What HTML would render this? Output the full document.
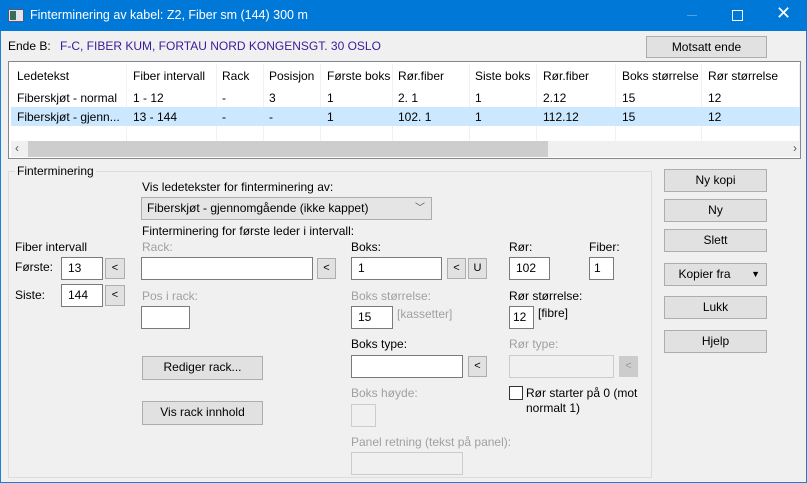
<!DOCTYPE html>
<html><head><meta charset="utf-8"><style>
*{box-sizing:border-box;margin:0;padding:0}
body{width:807px;height:483px;overflow:hidden;background:#f0f0f0;font-family:"Liberation Sans",sans-serif;font-size:12px;color:#000;position:relative}
.a{position:absolute;white-space:nowrap}
.win{position:absolute;left:0;top:0;width:807px;height:483px;border:1px solid #1a7fd6}
.title{position:absolute;left:0;top:0;width:807px;height:31px;background:#0078d7;color:#fff}
.btn{position:absolute;background:#e1e1e1;border:1px solid #adadad;text-align:center;line-height:20px}
.inp{position:absolute;background:#fff;border:1px solid #7a7a7a;padding-left:6px;line-height:20px}
.dis{background:#f0f0f0;border-color:#ccc}
.g{color:#a0a0a0}
.sb{position:absolute;background:#e1e1e1;border:1px solid #adadad;text-align:center;line-height:18px;font-size:11px}
.lv{position:absolute;left:8px;top:61px;width:793px;height:98px;border:1px solid #828790;background:#fff}
.cell{position:absolute;white-space:nowrap}
.sep{position:absolute;top:2px;width:1px;height:77px;background:#eef2f7}
</style></head><body>
<div class="win"></div>
<div class="title">
 <div class="a" style="left:8px;top:9px;width:16px;height:13px;background:#dfe6e9;border:1px solid #557"></div>
 <div class="a" style="left:10px;top:11px;width:6px;height:9px;background:#3a6b5a"></div>
 <div class="a" style="left:30px;top:8px;font-size:12.5px">Finterminering av kabel: Z2, Fiber sm (144) 300 m</div>
 <div class="a" style="left:687px;top:15px;width:10px;height:1px;background:#5a9de0"></div>
 <div class="a" style="left:732px;top:10px;width:11px;height:11px;border:1px solid #fff"></div>
 <div class="a" style="left:776px;top:3px;font-size:18px">✕</div>
</div>
<div class="a" style="left:8px;top:39px">Ende B:</div>
<div class="a" style="left:60px;top:39px;color:#3a1a9a">F-C, FIBER KUM, FORTAU NORD KONGENSGT. 30 OSLO</div>
<div class="btn" style="left:646px;top:36px;width:121px;height:22px">Motsatt ende</div>
<div class="lv">
 <div class="sep" style="left:117px"></div><div class="sep" style="left:207px"></div><div class="sep" style="left:254px"></div><div class="sep" style="left:311px"></div><div class="sep" style="left:383px"></div><div class="sep" style="left:460px"></div><div class="sep" style="left:527px"></div><div class="sep" style="left:606px"></div><div class="sep" style="left:692px"></div><div class="sep" style="left:790px"></div>
 <div class="a" style="left:2px;top:45px;width:789px;height:19px;background:#cce8ff"></div>
 <div class="cell" style="left:8px;top:7px">Ledetekst</div><div class="cell" style="left:124px;top:7px">Fiber intervall</div><div class="cell" style="left:213px;top:7px">Rack</div><div class="cell" style="left:260px;top:7px">Posisjon</div><div class="cell" style="left:318px;top:7px">Første boks</div><div class="cell" style="left:389px;top:7px">Rør.fiber</div><div class="cell" style="left:466px;top:7px">Siste boks</div><div class="cell" style="left:534px;top:7px">Rør.fiber</div><div class="cell" style="left:613px;top:7px">Boks størrelse</div><div class="cell" style="left:699px;top:7px">Rør størrelse</div>
 <div class="cell" style="left:8px;top:29px">Fiberskjøt - normal</div><div class="cell" style="left:124px;top:29px">1 - 12</div><div class="cell" style="left:213px;top:29px">-</div><div class="cell" style="left:260px;top:29px">3</div><div class="cell" style="left:318px;top:29px">1</div><div class="cell" style="left:389px;top:29px">2. 1</div><div class="cell" style="left:466px;top:29px">1</div><div class="cell" style="left:534px;top:29px">2.12</div><div class="cell" style="left:613px;top:29px">15</div><div class="cell" style="left:699px;top:29px">12</div>
 <div class="cell" style="left:8px;top:48px">Fiberskjøt - gjenn...</div><div class="cell" style="left:124px;top:48px">13 - 144</div><div class="cell" style="left:213px;top:48px">-</div><div class="cell" style="left:260px;top:48px">-</div><div class="cell" style="left:318px;top:48px">1</div><div class="cell" style="left:389px;top:48px">102. 1</div><div class="cell" style="left:466px;top:48px">1</div><div class="cell" style="left:534px;top:48px">112.12</div><div class="cell" style="left:613px;top:48px">15</div><div class="cell" style="left:699px;top:48px">12</div>
 <div class="a" style="left:2px;top:79px;width:789px;height:16px;background:#f0f0f0"></div>
 <div class="a" style="left:19px;top:79px;width:520px;height:16px;background:#cdcdcd"></div>
 <div class="a" style="left:6px;top:79px;color:#555">‹</div>
 <div class="a" style="left:784px;top:79px;color:#555">›</div>
</div>
<div class="a" style="left:8px;top:171px;width:644px;height:307px;border:1px solid #dcdcdc"></div>
<div class="a" style="left:15px;top:164px;background:#f0f0f0;padding:0 2px">Finterminering</div>
<div class="btn" style="left:664px;top:169px;width:103px;height:23px">Ny kopi</div>
<div class="btn" style="left:664px;top:199px;width:103px;height:23px">Ny</div>
<div class="btn" style="left:664px;top:229px;width:103px;height:23px">Slett</div>
<div class="btn" style="left:664px;top:263px;width:103px;height:23px;padding-right:22px">Kopier fra<span style="position:absolute;right:6px;top:0;font-size:9px">▼</span></div>
<div class="btn" style="left:664px;top:296px;width:103px;height:23px">Lukk</div>
<div class="btn" style="left:664px;top:330px;width:103px;height:23px">Hjelp</div>
<div class="a" style="left:142px;top:180px">Vis ledetekster for finterminering av:</div>
<div class="a" style="left:141px;top:197px;width:291px;height:23px;background:#e5e5e5;border:1px solid #adadad;padding-left:5px;line-height:21px">Fiberskjøt - gjennomgående (ikke kappet)<span style="position:absolute;right:6px;top:0;color:#555;font-size:10px">﹀</span></div>
<div class="a" style="left:142px;top:224px">Finterminering for første leder i intervall:</div>
<div class="a" style="left:15px;top:240px">Fiber intervall</div>
<div class="a" style="left:15px;top:260px">Første:</div>
<div class="inp" style="left:61px;top:257px;width:42px;height:23px">13</div>
<div class="sb" style="left:105px;top:258px;width:20px;height:21px">&lt;</div>
<div class="a" style="left:15px;top:288px">Siste:</div>
<div class="inp" style="left:61px;top:284px;width:42px;height:23px">144</div>
<div class="sb" style="left:105px;top:285px;width:20px;height:21px">&lt;</div>
<div class="a g" style="left:142px;top:240px">Rack:</div>
<div class="inp" style="left:141px;top:257px;width:172px;height:23px"></div>
<div class="sb" style="left:317px;top:258px;width:19px;height:21px">&lt;</div>
<div class="a g" style="left:142px;top:289px">Pos i rack:</div>
<div class="inp" style="left:141px;top:306px;width:49px;height:23px"></div>
<div class="btn" style="left:142px;top:356px;width:121px;height:24px">Rediger rack...</div>
<div class="btn" style="left:142px;top:401px;width:121px;height:24px">Vis rack innhold</div>
<div class="a" style="left:351px;top:240px">Boks:</div>
<div class="inp" style="left:351px;top:257px;width:91px;height:23px">1</div>
<div class="sb" style="left:447px;top:258px;width:19px;height:21px">&lt;</div>
<div class="sb" style="left:468px;top:258px;width:19px;height:21px">U</div>
<div class="a g" style="left:351px;top:289px">Boks størrelse:</div>
<div class="inp" style="left:351px;top:306px;width:42px;height:23px">15</div>
<div class="a g" style="left:397px;top:307px">[kassetter]</div>
<div class="a" style="left:351px;top:337px">Boks type:</div>
<div class="inp" style="left:351px;top:355px;width:112px;height:23px"></div>
<div class="sb" style="left:468px;top:356px;width:19px;height:21px">&lt;</div>
<div class="a g" style="left:351px;top:386px">Boks høyde:</div>
<div class="inp dis" style="left:351px;top:404px;width:25px;height:23px"></div>
<div class="a g" style="left:351px;top:435px">Panel retning (tekst på panel):</div>
<div class="inp dis" style="left:351px;top:452px;width:112px;height:23px"></div>
<div class="a" style="left:509px;top:240px">Rør:</div>
<div class="inp" style="left:509px;top:257px;width:41px;height:23px">102</div>
<div class="a" style="left:589px;top:240px">Fiber:</div>
<div class="inp" style="left:589px;top:257px;width:25px;height:23px;padding-left:4px">1</div>
<div class="a" style="left:509px;top:289px">Rør størrelse:</div>
<div class="inp" style="left:509px;top:306px;width:25px;height:23px;padding-left:3px">12</div>
<div class="a" style="left:538px;top:306px">[fibre]</div>
<div class="a g" style="left:509px;top:337px">Rør type:</div>
<div class="inp dis" style="left:509px;top:355px;width:105px;height:23px"></div>
<div class="sb" style="left:619px;top:356px;width:19px;height:21px;background:#ccc;border-color:#ccc;color:#999">&lt;</div>
<div class="a" style="left:509px;top:386px;width:14px;height:14px;border:1px solid #333;background:#fff"></div>
<div class="a" style="left:526px;top:386px;line-height:15px">Rør starter på 0 (mot<br>normalt 1)</div>
</body></html>
